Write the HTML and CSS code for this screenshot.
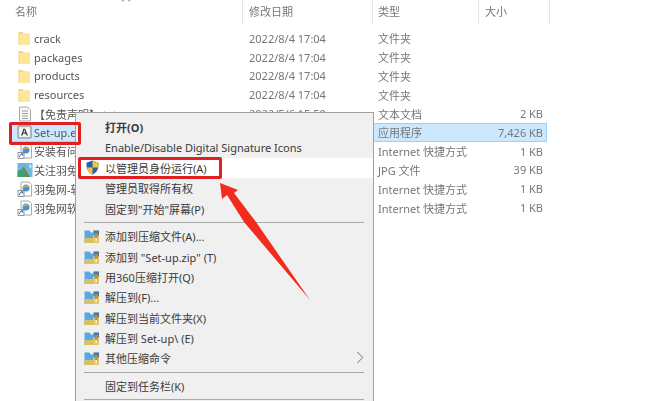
FILE: index.html
```html
<!DOCTYPE html>
<html lang="zh-CN">
<head>
<meta charset="utf-8">
<title>文件列表</title>
<link rel="stylesheet" href="styles.css">
</head>
<body>
<svg class="defs" width="0" height="0">
  <defs>
    <symbol id="folder" viewBox="0 0 16 16"><path d="M1.500 2h4l1 1.500h6V15h-11z" fill="#f4d67c"/><path d="M2.500 4h10.500v11H2.500z" fill="#fde699"/></symbol>
    <symbol id="doc" viewBox="0 0 16 16"><path d="M2.500 1h8l3 3v11h-11z" fill="#f8f8f8" stroke="#a8a8a8"/><path d="M5 5h6M5 7.500h6M5 10h6M5 12.500h6" stroke="#a0a0a0"/></symbol>
    <symbol id="adobe" viewBox="0 0 16 16"><rect x="1" y="2" width="13" height="12" rx="1" fill="#e8eef3" stroke="#7d7d7d"/><rect x="3" y="4" width="9" height="8" fill="#fafafa"/><path d="M4 11.500 6.500 4.500h1.200L5.500 11.500zM8 4.500l3 7H9.600L7.300 6zM6.500 8.500h2.500v1.200H6.200z" fill="#3a3a3a"/></symbol>
    <symbol id="link" viewBox="0 0 16 16"><path d="M4 1h8l2.500 2.500V15H4z" fill="#fff" stroke="#a9a9a9"/><circle cx="9" cy="7" r="3.500" fill="#3f93d8"/><path d="M6 6.500c2-2 5-2 6.500-.5" stroke="#e7b63c" fill="none" stroke-width="1.200"/><rect x="1" y="9.500" width="6" height="6" fill="#fff" stroke="#6e6e6e" stroke-width=".7"/><path d="M2.500 14c0-2 1-3 3-3M4 10.800h1.800v1.800" stroke="#2a62b8" fill="none"/></symbol>
    <symbol id="pic" viewBox="0 0 16 16"><rect x=".5" y="1" width="15" height="14" fill="#6fb7df"/><path d="M.5 15V9l5-2 5 8z" fill="#3f9f75"/><path d="M5 6l5 9h3L7 5z" fill="#6a8a4c"/><path d="M12 2l3 2-2 3z" fill="#ddeff8"/></symbol>
    <symbol id="zip" viewBox="0 0 16 16"><path d="M.5 2.500h5l1.500 2h2.500V15H.5z" fill="#5aa8e0"/><path d="M.5 10h9v5H.5z" fill="#d9c25e"/><path d="M9.500 2.500h5.500V15H9.500z" fill="#e3ca70"/><path d="M9.500 2.500h5.500v5H9.500z" fill="#4a78ad"/><rect x="10.800" y="5" width="2.800" height="8" fill="#c98e2b"/><rect x="11.200" y="10" width="2" height="3" fill="#fff3c4"/></symbol>
  </defs>
</svg>

<main class="explorer">
  <div class="sort-caret"></div>
  <div class="head">
    <div class="hcell name">名称</div>
    <div class="hcell date">修改日期</div>
    <div class="hcell type">类型</div>
    <div class="hcell size">大小</div>
  </div>
  <div class="rows">
    <div class="row"><div class="c-name"><svg class="ico"><use href="#folder"/></svg>crack</div><div class="c-date">2022/8/4 17:04</div><div class="c-type">文件夹</div><div class="c-size"></div></div>
    <div class="row"><div class="c-name"><svg class="ico"><use href="#folder"/></svg>packages</div><div class="c-date">2022/8/4 17:04</div><div class="c-type">文件夹</div><div class="c-size"></div></div>
    <div class="row"><div class="c-name"><svg class="ico"><use href="#folder"/></svg>products</div><div class="c-date">2022/8/4 17:04</div><div class="c-type">文件夹</div><div class="c-size"></div></div>
    <div class="row"><div class="c-name"><svg class="ico"><use href="#folder"/></svg>resources</div><div class="c-date">2022/8/4 17:04</div><div class="c-type">文件夹</div><div class="c-size"></div></div>
    <div class="row"><div class="c-name"><svg class="ico"><use href="#doc"/></svg>【免责声明】.txt</div><div class="c-date">2022/5/6 15:50</div><div class="c-type">文本文档</div><div class="c-size">2 KB</div></div>
    <div class="row selected"><div class="c-name"><svg class="ico"><use href="#adobe"/></svg>Set-up.exe</div><div class="c-date">2022/8/4 17:04</div><div class="c-type">应用程序</div><div class="c-size">7,426 KB</div></div>
    <div class="row"><div class="c-name"><svg class="ico"><use href="#link"/></svg>安装有问题</div><div class="c-date">2022/8/4 17:04</div><div class="c-type">Internet 快捷方式</div><div class="c-size">1 KB</div></div>
    <div class="row"><div class="c-name"><svg class="ico"><use href="#pic"/></svg>关注羽兔</div><div class="c-date">2022/8/4 17:04</div><div class="c-type">JPG 文件</div><div class="c-size">39 KB</div></div>
    <div class="row"><div class="c-name"><svg class="ico"><use href="#link"/></svg>羽兔网-软件</div><div class="c-date">2022/8/4 17:04</div><div class="c-type">Internet 快捷方式</div><div class="c-size">1 KB</div></div>
    <div class="row"><div class="c-name"><svg class="ico"><use href="#link"/></svg>羽兔网软件</div><div class="c-date">2022/8/4 17:04</div><div class="c-type">Internet 快捷方式</div><div class="c-size">1 KB</div></div>
  </div>
</main>

<nav class="menu">
  <div class="item strong"><span class="slot"></span>打开(O)</div>
  <div class="item"><span class="slot"></span>Enable/Disable Digital Signature Icons</div>
  <div class="item hover"><span class="slot"><svg class="shield" viewBox="0 0 16 16"><path d="M8 .6 14.500 3c0 6 -1 10-6.500 12.600C2.500 13 1.500 9 1.500 3z" fill="#2b5fb4"/><path d="M8 .6 14.500 3c0 2 -.1 3.500-.4 5H8zM8 8v7.600C5 14 3 12 2.200 8z" fill="#f2c43c"/></svg></span>以管理员身份运行(A)</div>
  <div class="item"><span class="slot"></span>管理员取得所有权</div>
  <div class="item"><span class="slot"></span>固定到"开始"屏幕(P)</div>
  <div class="sep"></div>
  <div class="item"><span class="slot"><svg class="ico"><use href="#zip"/></svg></span>添加到压缩文件(A)...</div>
  <div class="item"><span class="slot"><svg class="ico"><use href="#zip"/></svg></span>添加到 "Set-up.zip" (T)</div>
  <div class="item"><span class="slot"><svg class="ico"><use href="#zip"/></svg></span>用360压缩打开(Q)</div>
  <div class="item"><span class="slot"><svg class="ico"><use href="#zip"/></svg></span>解压到(F)...</div>
  <div class="item"><span class="slot"><svg class="ico"><use href="#zip"/></svg></span>解压到当前文件夹(X)</div>
  <div class="item"><span class="slot"><svg class="ico"><use href="#zip"/></svg></span>解压到 Set-up\ (E)</div>
  <div class="item more"><span class="slot"><svg class="ico"><use href="#zip"/></svg></span>其他压缩命令<svg class="chev" viewBox="0 0 8 14"><path d="M1 1l6 6-6 6" fill="none" stroke="#666"/></svg></div>
  <div class="sep"></div>
  <div class="item"><span class="slot"></span>固定到任务栏(K)</div>
  <div class="sep"></div>
</nav>

<div class="mark mark-file"></div>
<div class="mark mark-admin"></div>
<svg class="arrow" viewBox="0 0 660 401"><path d="M220 183 238 190 234 193 256 222 310 300 244 222 227 195 222 199z" fill="#f32b1f"/></svg>
</body>
</html>
```

FILE: styles.css
```css
* { box-sizing: border-box; }
html, body { margin: 0; height: 100%; }
body {
  width: 660px; height: 401px; overflow: hidden; position: relative; background: #fff;
  font-family: "Noto Sans", "Noto Sans CJK SC", sans-serif; font-size: 11px; color: #555;
  filter: blur(0.4px);
}
.defs { position: absolute; }
.ico { width: 16px; height: 16px; flex: none; }
.explorer { padding-left: 9px; }
.sort-caret {
  position: absolute; left: 123px; top: -2px; width: 6px; height: 6px;
  border-left: 1px solid #888; border-top: 1px solid #888; transform: rotate(45deg);
}
.head { display: grid; grid-template-columns: 233px 130px 106px 72px; height: 24px; }
.hcell { padding-left: 6px; line-height: 24px; color: #777; border-left: 1px solid #e6e6e6; }
.hcell.name { border-left: 0; padding-left: 6px; }
.hcell.type { padding-left: 5px; }
.hcell.size { border-right: 1px solid #e6e6e6; }
.rows { padding-top: 5px; width: 538px; display: flex; flex-direction: column; }
.row {
  display: grid; grid-template-columns: 233px 129px 107px 67px; height: 18.8px; align-items: center;
  border: 1px solid transparent;
}
.row.selected { background: #cce8ff; border-color: #99d1ff; }
.c-name { display: flex; align-items: center; gap: 1px; padding-left: 7px; color: #555; white-space: nowrap; }
.c-date, .c-type { padding-left: 6px; color: #777; white-space: nowrap; }
.c-size { text-align: right; padding-right: 3px; color: #777; }
.menu {
  position: absolute; left: 75px; top: 112px; width: 299px; height: 300px;
  background: #f0f0f0; border: 1px solid #a0a0a0; padding-top: 4px; color: #3a3a3a;
}
.item { display: flex; align-items: center; height: 20.4px; white-space: nowrap; }
.item.strong { font-weight: 700; }
.item.hover { background: #fff; }
.item.more { position: relative; }
.slot { width: 29px; flex: none; display: flex; justify-content: center; padding-left: 3px; }
.shield { width: 15px; height: 15px; }
.chev { position: absolute; right: 9px; top: 3px; width: 8px; height: 13px; }
.sep { height: 1px; background: #a9a9a9; margin: 3px 0 3px 8px; width: 280px; }
.mark { position: absolute; border: 3px solid #e02020; border-radius: 2px; }
.mark-file { left: 9px; top: 122px; width: 72px; height: 23px; }
.mark-admin { left: 78px; top: 157px; width: 144px; height: 21.500px; }
.arrow { position: absolute; left: 0; top: 0; width: 660px; height: 401px; pointer-events: none; }
```
